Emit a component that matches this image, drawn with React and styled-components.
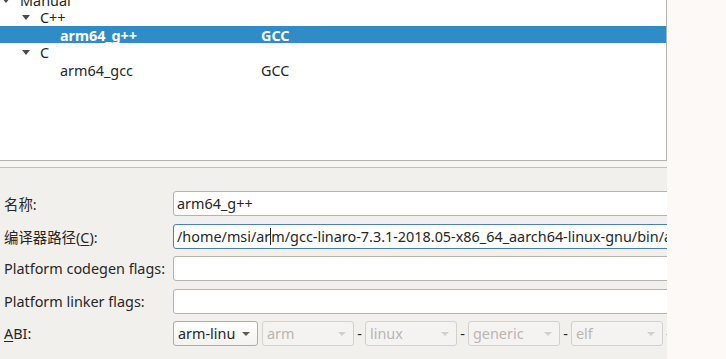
import React from "react";
import styled, { createGlobalStyle } from "styled-components";

const GlobalStyle = createGlobalStyle`
  html, body { margin: 0; padding: 0; }
  body {
    background: #fcf9f6;
    font-family: "Noto Sans", "Noto Sans CJK SC", sans-serif;
    font-size: 14.4px;
    color: #262626;
  }
`;

const Page = styled.div`
  display: flex;
  width: 726px;
  height: 359px;
  overflow: hidden;
`;

const Main = styled.div`
  width: 667px;
  flex: none;
  display: flex;
  flex-direction: column;
  background: #f2f0ed;
  overflow: hidden;
`;

const SideStrip = styled.div`
  flex: 1;
  background: #fcf9f6;
`;

const TreePanel = styled.div`
  height: 160px;
  flex: none;
  background: #ffffff;
  border-right: 1px solid #b6b2ae;
  border-bottom: 1px solid #b6b2ae;
  overflow: hidden;
`;

const TreeList = styled.div`
  margin-top: -9px;
  display: flex;
  flex-direction: column;
`;

const Row = styled.div`
  height: 17.4px;
  display: grid;
  grid-template-columns: 261px 1fr;
  align-items: center;
  background: ${(p) => (p.$selected ? "#308cc6" : "transparent")};
  color: ${(p) => (p.$selected ? "#ffffff" : "#262626")};
  font-weight: ${(p) => (p.$selected ? 700 : 400)};
  white-space: nowrap;
`;

const NameCell = styled.div`
  display: flex;
  align-items: center;
  padding-left: ${(p) => p.$depth * 20}px;
`;

const Expander = styled.span`
  width: 20px;
  flex: none;
  display: flex;
  align-items: center;
  padding-left: 2px;
  box-sizing: border-box;
`;

const Triangle = styled.span`
  width: 0;
  height: 0;
  border-left: 4px solid transparent;
  border-right: 4px solid transparent;
  border-top: 5px solid #4a4a4a;
  margin-top: -1px;
`;

const Separator = styled.div`
  height: 6px;
  flex: none;
  background: #f8f6f4;
  border-bottom: 1px solid #c3bfbb;
`;

const Form = styled.div`
  padding: 23px 0 0 0;
  display: grid;
  grid-template-columns: 173px 1fr;
  grid-auto-rows: 25px;
  row-gap: 7.5px;
  align-items: center;
`;

const Label = styled.label`
  padding-left: 4px;
  white-space: nowrap;
  color: #262626;
`;

const Mnemonic = styled.span`
  text-decoration: underline;
  text-underline-offset: 2px;
`;

const TextBox = styled.div`
  width: 540px;
  height: 25px;
  box-sizing: border-box;
  background: #ffffff;
  border: 1px solid ${(p) => (p.$focused ? "#4f7fb5" : "#b7b3af")};
  border-radius: 3px;
  padding: 0 3px;
  display: flex;
  align-items: center;
  white-space: nowrap;
  overflow: hidden;
  color: #262626;
`;

const Caret = styled.span`
  display: inline-block;
  width: 1px;
  height: 17px;
  flex: none;
  background: #222;
`;

const AbiRow = styled.div`
  display: flex;
  align-items: center;
  height: 25px;
`;

const Combo = styled.div`
  width: ${(p) => p.$w}px;
  height: 25px;
  flex: none;
  box-sizing: border-box;
  border: 1px solid ${(p) => (p.$disabled ? "#d4d0cc" : "#b0aca8")};
  border-radius: 3px;
  background: ${(p) =>
    p.$disabled ? "#f5f3f1" : "linear-gradient(#ffffff, #f4f2f0)"};
  color: ${(p) => (p.$disabled ? "#b9b5b1" : "#262626")};
  display: flex;
  align-items: center;
  padding: 0 7px 0 4px;
  margin-right: ${(p) => p.$mr || 0}px;
`;

const ComboText = styled.span`
  flex: 1;
  overflow: hidden;
  white-space: nowrap;
  max-width: ${(p) => (p.$clip ? `${p.$clip}px` : "none")};
`;

const ComboArrow = styled.span`
  width: 0;
  height: 0;
  border-left: 4px solid transparent;
  border-right: 4px solid transparent;
  border-top: 4px solid ${(p) => (p.$disabled ? "#d2cecb" : "#5a5a5a")};
  margin-left: auto;
`;

const Dash = styled.span`
  width: 11px;
  flex: none;
  text-align: center;
  color: #262626;
`;

const TreeRow = ({ depth, expandable, name, compiler, selected }) => (
  <Row $selected={selected}>
    <NameCell $depth={depth}>
      <Expander>{expandable && <Triangle />}</Expander>
      <span>{name}</span>
    </NameCell>
    <span>{compiler}</span>
  </Row>
);

const Select = ({ w, value, disabled, mr, clip }) => (
  <Combo $w={w} $disabled={disabled} $mr={mr}>
    <ComboText $clip={clip}>{value}</ComboText>
    <ComboArrow $disabled={disabled} />
  </Combo>
);

export default function App() {
  return (
    <>
      <GlobalStyle />
      <Page>
        <Main>
          <TreePanel>
            <TreeList>
              <TreeRow depth={0} expandable name="Manual" />
              <TreeRow depth={1} expandable name="C++" />
              <TreeRow depth={2} name="arm64_g++" compiler="GCC" selected />
              <TreeRow depth={1} expandable name="C" />
              <TreeRow depth={2} name="arm64_gcc" compiler="GCC" />
            </TreeList>
          </TreePanel>
          <Separator />
          <Form>
            <Label>名称:</Label>
            <TextBox>arm64_g++</TextBox>
            <Label>
              编译器路径(<Mnemonic>C</Mnemonic>):
            </Label>
            <TextBox $focused>
              <span>/home/msi/ar</span>
              <Caret />
              <span>m/gcc-linaro-7.3.1-2018.05-x86_64_aarch64-linux-gnu/bin/aarch64-linux-gnu-g++</span>
            </TextBox>
            <Label>Platform codegen flags:</Label>
            <TextBox />
            <Label>Platform linker flags:</Label>
            <TextBox />
            <Label>
              <Mnemonic>A</Mnemonic>BI:
            </Label>
            <AbiRow>
              <Select w={85} value="arm-linux" mr={4} clip={57} />
              <Select w={92} value="arm" disabled />
              <Dash>-</Dash>
              <Select w={92} value="linux" disabled />
              <Dash>-</Dash>
              <Select w={92} value="generic" disabled />
              <Dash>-</Dash>
              <Select w={92} value="elf" disabled />
              <Dash>-</Dash>
              <Select w={92} value="64bit" disabled />
            </AbiRow>
          </Form>
        </Main>
        <SideStrip />
      </Page>
    </>
  );
}
